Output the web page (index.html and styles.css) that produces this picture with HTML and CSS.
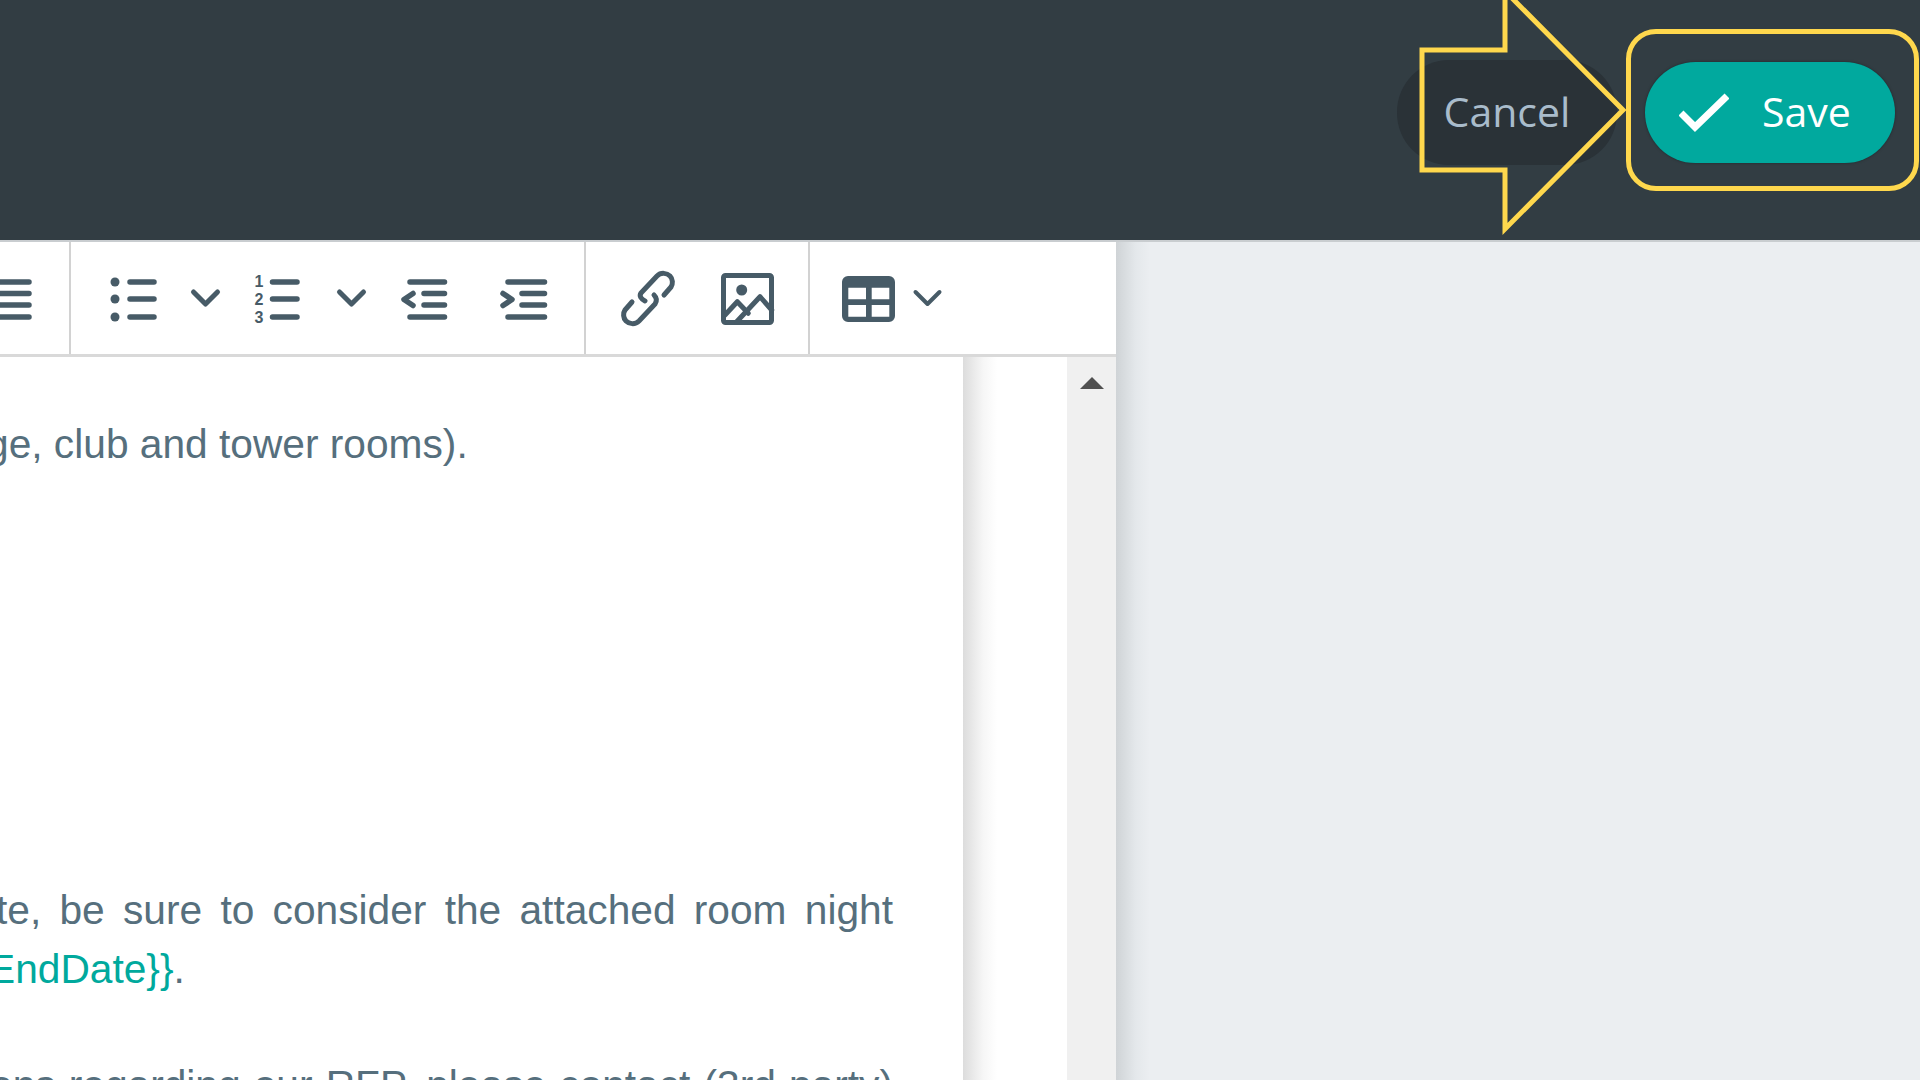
FILE: index.html
```html
<!DOCTYPE html>
<html lang="en">
<head>
    <meta charset="UTF-8">
    <title>Edit Template</title>
    <link rel="stylesheet" href="styles.css">
</head>
<body>
    <header class="top-bar">
        <button class="btn btn-cancel">Cancel</button>
        <button class="btn btn-save">
            <svg class="check" width="50" height="40" viewBox="0 0 50 40"><path d="M2 20 L16 34 L48 3"/></svg>
            <span>Save</span>
        </button>
        <!-- yellow callouts drawn over the buttons -->
        <svg class="callout-arrow" width="300" height="240" viewBox="0 0 300 240">
            <polygon points="22,50 105,50 105,-9 223,110 105,229 105,170 22,170"/>
        </svg>
        <div class="callout-box"></div>
    </header>

    <div class="workspace">
        <div class="editor">
            <div class="toolbar">
                <div class="tool-group group-align">
                    <svg class="icon" width="32" height="60" viewBox="0 0 32 60">
                        <path d="M-10 14H29M-10 25.500H29M-10 37H29M-10 49H29"/>
                    </svg>
                </div>
                <div class="tool-group group-list">
                    <svg class="icon" width="47" height="60" viewBox="0 0 47 60">
                        <circle class="solid" cx="5" cy="14" r="4.500"/>
                        <circle class="solid" cx="5" cy="31" r="4.500"/>
                        <circle class="solid" cx="5" cy="49" r="4.500"/>
                        <path d="M20 14H44M20 31H44M20 49H44"/>
                    </svg>
                    <svg class="icon chevron" width="29" height="60" viewBox="0 0 29 60">
                        <path d="M2.500 24 L14.500 36 L26.500 24"/>
                    </svg>
                    <svg class="icon numbered" width="44" height="60" viewBox="0 0 44 60">
                        <text class="digit" x="-0.500" y="19">1</text>
                        <text class="digit" x="-0.500" y="37">2</text>
                        <text class="digit" x="-0.500" y="55">3</text>
                        <path d="M17.500 14H42M17.500 31H42M17.500 49H42"/>
                    </svg>
                    <svg class="icon chevron chevron-wide" width="29" height="60" viewBox="0 0 29 60">
                        <path d="M2.500 24 L14.500 36 L26.500 24"/>
                    </svg>
                    <svg class="icon outdent" width="47" height="60" viewBox="0 0 47 60">
                        <path d="M10 14H44.500M24 25.500H44.500M24 37H44.500M10 49H44.500"/>
                        <path d="M13 25.500 L4 31.500 L13 37.500"/>
                    </svg>
                    <svg class="icon indent" width="47" height="60" viewBox="0 0 47 60">
                        <path d="M8 14H44.500M22 25.500H44.500M22 37H44.500M8 49H44.500"/>
                        <path d="M3 25.500 L12 31.500 L3 37.500"/>
                    </svg>
                </div>
                <div class="tool-group group-insert">
                    <svg class="icon thin" width="50" height="60" viewBox="0 0 50 60">
                        <path d="M22 33 C18 31 16 28 18 25 L34 8 C38 4 44 5 47 8 C50 11 50 16 48 19 L41 27"/>
                        <path d="M31 27 C34 30 34 33 32 36 L16 53 C12 57 6 56 3 53 C0 50 0 45 2 42 L9 34"/>
                    </svg>
                    <svg class="icon thin picture" width="53" height="60" viewBox="0 0 53 60">
                        <rect x="2.500" y="7.500" width="48" height="47" rx="2"/>
                        <circle class="solid" cx="20.700" cy="22" r="5.500"/>
                        <path d="M4 47 L16.300 33.700 L27.300 45.300"/>
                        <path d="M15.700 53.700 L39 28.700 L50.700 42"/>
                    </svg>
                </div>
                <div class="tool-group group-table">
                    <svg class="icon" width="53" height="60" viewBox="0 0 53 60">
                        <path class="solid" fill-rule="evenodd" d="M6 8H47A6 6 0 0 1 53 14V48A6 6 0 0 1 47 54H6A6 6 0 0 1 0 48V14A6 6 0 0 1 6 8ZM6.300 19.700V31.300H24V19.700ZM29.700 19.700V31.300H47.300V19.700ZM6.300 37V48.700H24V37ZM29.700 37V48.700H47.300V37Z"/>
                    </svg>
                    <svg class="icon chevron chevron-near" width="29" height="60" viewBox="0 0 29 60">
                        <path d="M2.500 24 L14.500 36 L26.500 24"/>
                    </svg>
                </div>
            </div>

            <div class="editor-body">
                <div class="paper">
                    <p class="line line-first">ge, club and tower rooms).</p>
                    <p class="line line-just line-rate">te, be sure to consider the attached room night</p>
                    <p class="line line-date"><span class="token">EndDate}}</span>.</p>
                    <p class="line line-just line-last">ons regarding our RFP, please contact (3rd party)</p>
                </div>
                <div class="gutter"></div>
                <div class="scrollbar"><div class="scroll-up"></div></div>
            </div>
        </div>
        <div class="side"></div>
    </div>
</body>
</html>
```

FILE: styles.css
```css
html, body {
    height: 100%;
}
body {
    margin: 0;
    height: 1080px;
    overflow: hidden;
    display: flex;
    flex-direction: column;
    font-family: "Liberation Sans", Arial, sans-serif;
    background-color: #ebeef1;
}
.top-bar {
    position: relative;
    flex: none;
    height: 225px;
    padding-bottom: 15px;
    padding-right: 25px;
    display: flex;
    align-items: center;
    justify-content: flex-end;
    gap: 28px;
    background-color: #323d43;
    border-bottom: 2px solid #c9cdd0;
    overflow: hidden;
}
.btn {
    border: none;
    font-family: "Open Sans", sans-serif;
    font-size: 41px;
    border-radius: 52px;
    padding: 0;
}
.btn-cancel {
    width: 220px;
    height: 105px;
    padding-bottom: 3px;
    background-color: #2a3237;
    color: #a9bccb;
}
.btn-save {
    width: 250px;
    height: 101px;
    display: flex;
    align-items: center;
    padding-left: 34px;
    gap: 33px;
    background-color: #01a99e;
    color: #fff;
    box-shadow: 0 0 3px rgba(0, 0, 0, 0.35);
}
.btn-save span {
    margin-bottom: 3px;
}
.check path {
    fill: none;
    stroke: #fff;
    stroke-width: 7;
}
.callout-arrow {
    position: absolute;
    top: 0;
    left: 1400px;
}
.callout-arrow polygon {
    fill: none;
    stroke: #ffd84d;
    stroke-width: 5;
}
.callout-box {
    position: absolute;
    top: 29px;
    left: 1626px;
    width: 283px;
    height: 152px;
    border: 5px solid #ffd84d;
    border-radius: 30px;
}
.workspace {
    flex: 1;
    display: flex;
    min-height: 0;
}
.editor {
    width: 1116px;
    flex: none;
    display: flex;
    flex-direction: column;
    background-color: #fff;
}
.toolbar {
    flex: none;
    height: 112px;
    display: flex;
    border-bottom: 3px solid #d9d9d9;
}
.tool-group {
    display: flex;
    align-items: center;
    box-sizing: border-box;
    border-right: 2px solid #d2d2d2;
}
.group-align {
    width: 71px;
}
.group-list {
    width: 515px;
    padding-left: 39px;
}
.group-insert {
    width: 224px;
    padding-left: 37px;
}
.group-table {
    flex: 1;
    padding-left: 32px;
    border-right: none;
}
.icon {
    flex: none;
    overflow: visible;
}
.icon path, .icon rect {
    fill: none;
    stroke: #475b67;
    stroke-width: 5.5;
    stroke-linecap: round;
    stroke-linejoin: round;
}
.icon.thin path, .icon.thin rect {
    stroke-width: 5;
}
.icon .solid, .icon path.solid {
    fill: #475b67;
    stroke: none;
}
.icon.chevron path {
    stroke-width: 5;
}
.icon.chevron-near path {
    stroke-width: 4;
}
.digit {
    font-family: "Liberation Sans", Arial, sans-serif;
    font-size: 16px;
    font-weight: bold;
    fill: #475b67;
}
.chevron {
    margin-left: 34px;
}
.numbered {
    margin-left: 35px;
}
.chevron-wide {
    margin-left: 38px;
}
.outdent {
    margin-left: 34px;
}
.indent {
    margin-left: 53px;
}
.picture {
    margin-left: 48px;
}
.chevron-near {
    margin-left: 18px;
}
.editor-body {
    flex: 1;
    display: flex;
    min-height: 0;
    overflow: hidden;
}
.paper {
    width: 893px;
    padding: 58px 70px 0 0;
    flex: none;
    font-size: 40.7px;
    line-height: 58.4px;
    color: #566f7d;
    white-space: nowrap;
}
.line {
    margin: 0;
}
.line-first {
    margin-left: -14px;
    margin-bottom: 407.8px;
}
.line-just {
    text-align: justify;
    text-align-last: justify;
    white-space: normal;
}
.line-rate {
    margin-left: -4px;
}
.line-date {
    margin-left: -12px;
    margin-bottom: 58.4px;
}
.line-last {
    margin-left: -10px;
}
.token {
    color: #00a99d;
}
.gutter {
    width: 104px;
    flex: none;
    background: linear-gradient(to right, #dcdcdc, #f6f6f6 20px, #fff 34px);
}
.scrollbar {
    width: 49px;
    flex: none;
    background-color: #f0f0f0;
    padding-top: 20px;
    box-sizing: border-box;
}
.scroll-up {
    width: 0;
    height: 0;
    margin: 0 auto;
    border-left: 12px solid transparent;
    border-right: 12px solid transparent;
    border-bottom: 12px solid #505050;
}
.side {
    flex: 1;
    background: linear-gradient(to right, #cfd3d6, #e4e8eb 20px, #ebeef1 34px);
}
```
